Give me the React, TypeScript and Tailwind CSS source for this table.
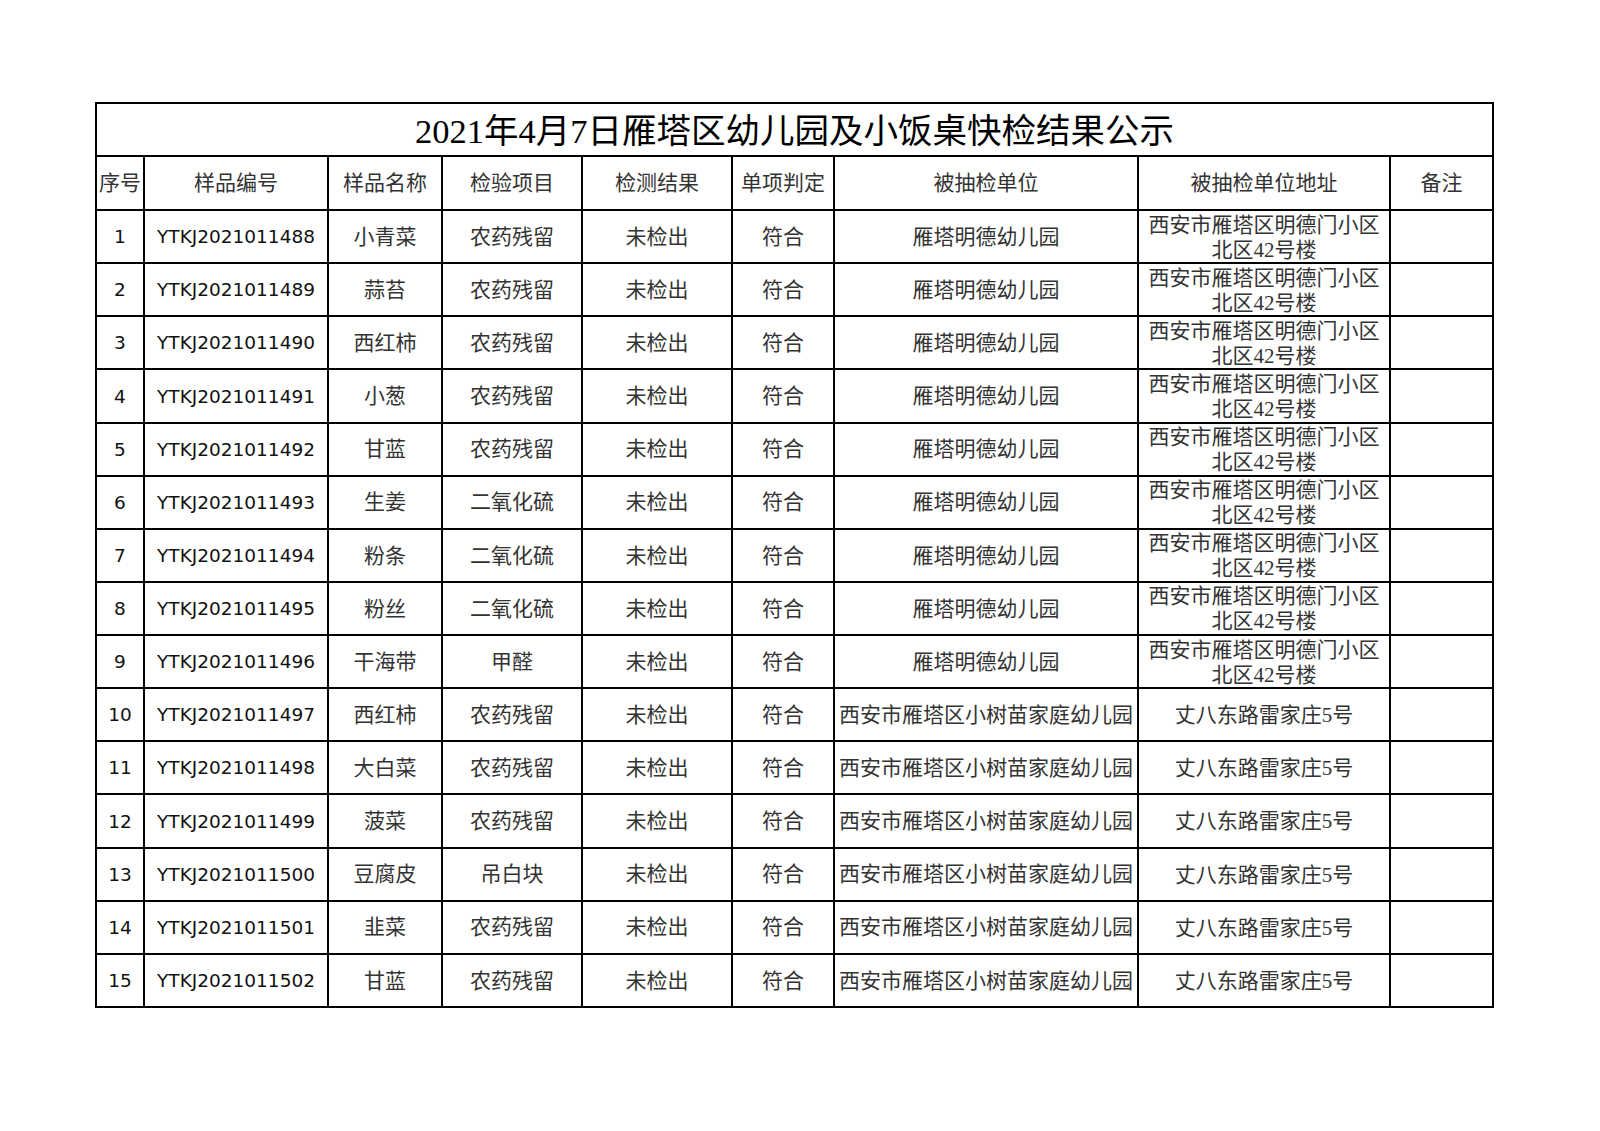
const GRID_COLS =
  "grid grid-cols-[48px_184px_114px_140px_150px_102px_304px_252px_103px] grid-rows-[53px_54px_repeat(15,53.13px)]";

const CJK =
  "font-[family-name:'Liberation_Serif','Noto_Sans_CJK_SC',serif] text-[21px] text-[#333] pt-[2px]";
const LATIN = "font-[family-name:'DejaVu_Sans',sans-serif] text-[18.5px] text-[#111] pt-[1px]";

const headers = [
  "序号",
  "样品编号",
  "样品名称",
  "检验项目",
  "检测结果",
  "单项判定",
  "被抽检单位",
  "被抽检单位地址",
  "备注",
];

const names = [
  "小青菜",
  "蒜苔",
  "西红柿",
  "小葱",
  "甘蓝",
  "生姜",
  "粉条",
  "粉丝",
  "干海带",
  "西红柿",
  "大白菜",
  "菠菜",
  "豆腐皮",
  "韭菜",
  "甘蓝",
];

const items = [
  "农药残留",
  "农药残留",
  "农药残留",
  "农药残留",
  "农药残留",
  "二氧化硫",
  "二氧化硫",
  "二氧化硫",
  "甲醛",
  "农药残留",
  "农药残留",
  "农药残留",
  "吊白块",
  "农药残留",
  "农药残留",
];

const rows = names.map((name, i) => ({
  no: i + 1,
  code: "YTKJ" + String(2021011488 + i),
  name,
  item: items[i],
  unit: i < 9 ? "雁塔明德幼儿园" : "西安市雁塔区小树苗家庭幼儿园",
  twoLine: i < 9,
}));

function Cell({ children, className = "" }: { children?: React.ReactNode; className?: string }) {
  return (
    <div
      className={`flex items-center justify-center border-r-2 border-b-2 border-black text-center whitespace-nowrap overflow-hidden ${className}`}
    >
      {children}
    </div>
  );
}

export default function App() {
  return (
    <div lang="zh-CN" className="min-h-screen bg-white pt-[102px] pl-[95px]">
      <div className={`${GRID_COLS} w-[1399px] border-l-2 border-t-2 border-black`}>
        <Cell className="col-span-9 pt-[4px] font-[family-name:'Liberation_Serif','Noto_Sans_CJK_SC',serif] text-[34.5px] text-black">
          2021年4月7日雁塔区幼儿园及小饭桌快检结果公示
        </Cell>

        {headers.map((h) => (
          <Cell key={h} className={CJK}>
            {h}
          </Cell>
        ))}

        {rows.map((r) => (
          <div key={r.no} className="contents">
            <Cell className={LATIN}>{r.no}</Cell>
            <Cell className={LATIN}>{r.code}</Cell>
            <Cell className={CJK}>{r.name}</Cell>
            <Cell className={CJK}>{r.item}</Cell>
            <Cell className={CJK}>未检出</Cell>
            <Cell className={CJK}>符合</Cell>
            <Cell className={CJK}>{r.unit}</Cell>
            <Cell className={`${CJK} leading-[25px]`}>
              {r.twoLine ? (
                <div className="flex flex-col items-center">
                  <span>西安市雁塔区明德门小区</span>
                  <span>北区42号楼</span>
                </div>
              ) : (
                "丈八东路雷家庄5号"
              )}
            </Cell>
            <Cell />
          </div>
        ))}
      </div>
    </div>
  );
}
